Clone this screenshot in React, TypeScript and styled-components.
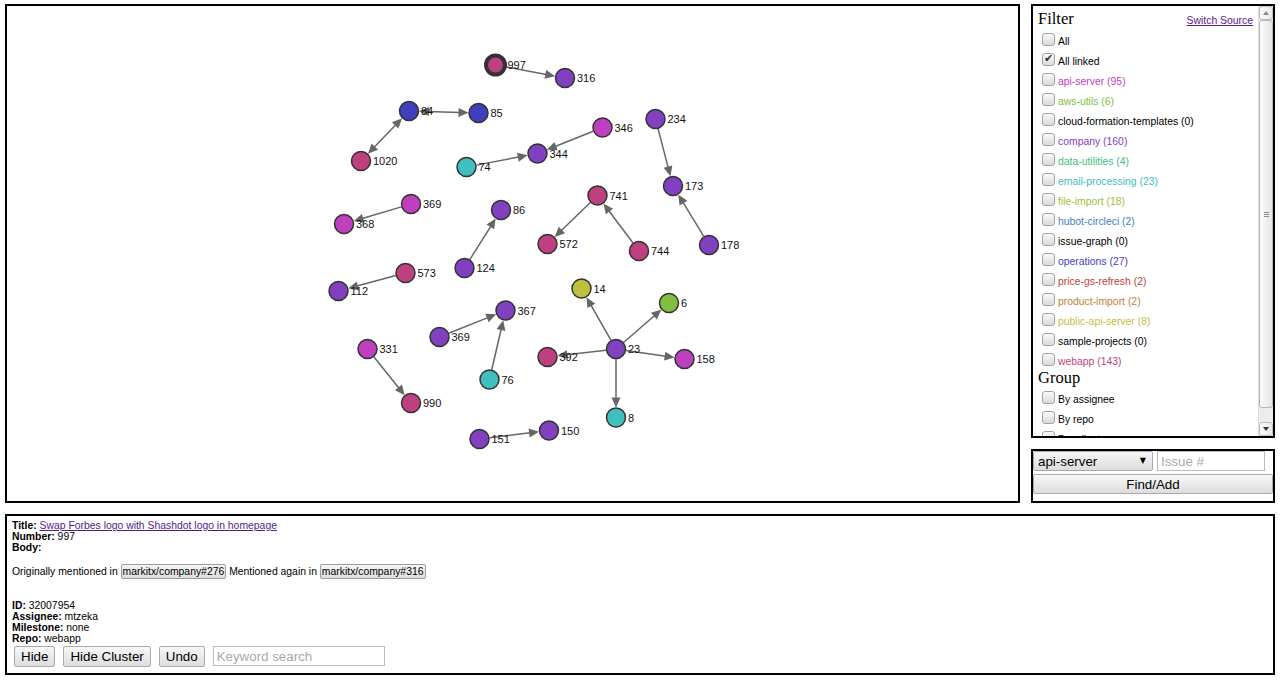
import React from 'react';
import styled, {createGlobalStyle} from 'styled-components';

const GlobalStyle = createGlobalStyle`
    html, body {
        margin: 0;
        padding: 0;
        background: #fff;
    }
    body {
        font-family: "Liberation Sans", Arial, sans-serif;
        color: #000;
    }
`

const hue = (h: number) => `hsl(${h}, 50%, 50%)`

const colors = {
    apiServer: hue(300),
    aws: hue(90),
    company: hue(270),
    dataUtils: hue(150),
    email: hue(180),
    fileImport: hue(75),
    hubot: hue(210),
    operations: hue(240),
    price: hue(0),
    product: hue(30),
    publicApi: hue(60),
    webapp: hue(330),
}

const repos = [
    {name: 'api-server', count: 95, color: colors.apiServer},
    {name: 'aws-utils', count: 6, color: colors.aws},
    {name: 'cloud-formation-templates', count: 0, color: '#000'},
    {name: 'company', count: 160, color: colors.company},
    {name: 'data-utilities', count: 4, color: colors.dataUtils},
    {name: 'email-processing', count: 23, color: colors.email},
    {name: 'file-import', count: 18, color: colors.fileImport},
    {name: 'hubot-circleci', count: 2, color: colors.hubot},
    {name: 'issue-graph', count: 0, color: '#000'},
    {name: 'operations', count: 27, color: colors.operations},
    {name: 'price-gs-refresh', count: 2, color: colors.price},
    {name: 'product-import', count: 2, color: colors.product},
    {name: 'public-api-server', count: 8, color: colors.publicApi},
    {name: 'sample-projects', count: 0, color: '#000'},
    {name: 'webapp', count: 143, color: colors.webapp},
]

type GraphNode = { key: string, label: string, x: number, y: number, color: string, selected?: boolean }

// positions are page coordinates, the svg is shifted by the panel offset
const nodes: GraphNode[] = [
    {key: '997', label: '997', x: 495.5, y: 65, color: colors.webapp, selected: true},
    {key: '316', label: '316', x: 565, y: 78, color: colors.company},
    {key: '84', label: '84', x: 409, y: 111, color: colors.operations},
    {key: '85', label: '85', x: 478.5, y: 113, color: colors.operations},
    {key: '1020', label: '1020', x: 361, y: 161, color: colors.webapp},
    {key: '346', label: '346', x: 602.5, y: 127.5, color: colors.apiServer},
    {key: '344', label: '344', x: 537.5, y: 153.5, color: colors.company},
    {key: '74', label: '74', x: 466.5, y: 167, color: colors.email},
    {key: '234', label: '234', x: 655.5, y: 119, color: colors.company},
    {key: '173', label: '173', x: 673, y: 186, color: colors.company},
    {key: '178', label: '178', x: 709, y: 245, color: colors.company},
    {key: '741', label: '741', x: 597.5, y: 195.5, color: colors.webapp},
    {key: '572', label: '572', x: 547.5, y: 244, color: colors.webapp},
    {key: '744', label: '744', x: 639, y: 251, color: colors.webapp},
    {key: '369a', label: '369', x: 411, y: 204, color: colors.apiServer},
    {key: '368', label: '368', x: 344, y: 224, color: colors.apiServer},
    {key: '86', label: '86', x: 501, y: 210, color: colors.company},
    {key: '124', label: '124', x: 464.5, y: 268, color: colors.company},
    {key: '573', label: '573', x: 405.5, y: 273, color: colors.webapp},
    {key: '112', label: '112', x: 338.5, y: 291, color: colors.company},
    {key: '14', label: '14', x: 581.5, y: 288.5, color: colors.publicApi},
    {key: '6', label: '6', x: 669, y: 303, color: colors.aws},
    {key: '23', label: '23', x: 616, y: 349, color: colors.company},
    {key: '392', label: '392', x: 547.5, y: 357, color: colors.webapp},
    {key: '158', label: '158', x: 684.5, y: 359, color: colors.apiServer},
    {key: '8', label: '8', x: 616, y: 417.5, color: colors.email},
    {key: '367', label: '367', x: 505.5, y: 310.5, color: colors.company},
    {key: '369b', label: '369', x: 439.5, y: 337, color: colors.company},
    {key: '76', label: '76', x: 489.5, y: 379.5, color: colors.email},
    {key: '331', label: '331', x: 367.5, y: 349, color: colors.apiServer},
    {key: '990', label: '990', x: 411, y: 403, color: colors.webapp},
    {key: '151', label: '151', x: 479.5, y: 439, color: colors.company},
    {key: '150', label: '150', x: 549, y: 430.5, color: colors.company},
]

const links: [string, string, boolean?][] = [
    ['997', '316'],
    ['84', '85', true],
    ['1020', '84', true],
    ['346', '344'],
    ['74', '344'],
    ['234', '173'],
    ['178', '173'],
    ['741', '572'],
    ['744', '741'],
    ['369a', '368'],
    ['124', '86'],
    ['573', '112'],
    ['23', '14'],
    ['23', '6'],
    ['23', '392'],
    ['23', '158'],
    ['23', '8'],
    ['369b', '367'],
    ['76', '367'],
    ['331', '990'],
    ['151', '150'],
]

const byKey = (k: string) => nodes.find(n => n.key === k)!

const R = 10
const HEAD = 10
const HALF = 4.5

function arrowHead(tipX: number, tipY: number, ux: number, uy: number) {
    const bx = tipX - ux * HEAD
    const by = tipY - uy * HEAD
    return `${tipX},${tipY} ${bx - uy * HALF},${by + ux * HALF} ${bx + uy * HALF},${by - ux * HALF}`
}

function Link({from, to, both}: { from: GraphNode, to: GraphNode, both?: boolean }) {
    const dx = to.x - from.x
    const dy = to.y - from.y
    const len = Math.hypot(dx, dy)
    const ux = dx / len
    const uy = dy / len
    const startOff = both ? R + HEAD - 1 : R
    const x1 = from.x + ux * startOff
    const y1 = from.y + uy * startOff
    const x2 = to.x - ux * (R + HEAD - 1)
    const y2 = to.y - uy * (R + HEAD - 1)
    return (
        <g>
            <line x1={x1} y1={y1} x2={x2} y2={y2} stroke="#666" strokeWidth={1.5}/>
            <polygon points={arrowHead(to.x - ux * R, to.y - uy * R, ux, uy)} fill="#666"/>
            {both && <polygon points={arrowHead(from.x + ux * R, from.y + uy * R, -ux, -uy)} fill="#666"/>}
        </g>
    )
}

function Graph() {
    return (
        <svg width="100%" height="100%">
            <g transform="translate(-7,-6)">
                {links.map(([a, b, both]) => (
                    <Link key={a + b} from={byKey(a)} to={byKey(b)} both={both}/>
                ))}
                {nodes.map(n => (
                    <g key={n.key}>
                        <circle cx={n.x} cy={n.y} r={9.5} fill={n.color}
                                stroke="#333" strokeWidth={n.selected ? 4 : 1.5}/>
                        <NodeLabel x={n.x + 12} y={n.y + 4}>{n.label}</NodeLabel>
                    </g>
                ))}
            </g>
        </svg>
    )
}

function App() {
    return (
        <Page>
            <GlobalStyle/>
            <TopRow>
                <GraphPanel>
                    <Graph/>
                </GraphPanel>
                <Sidebar>
                    <FilterPanel>
                        <FilterList>
                            <FilterHead>
                                <Heading>Filter</Heading>
                                <SwitchLink href="#">Switch Source</SwitchLink>
                            </FilterHead>
                            <Row><Check type="checkbox" readOnly/><span>All</span></Row>
                            <Row><Check type="checkbox" checked readOnly/><span>All linked</span></Row>
                            {repos.map(r => (
                                <Row key={r.name} $color={r.color}>
                                    <Check type="checkbox" readOnly/>
                                    <span>{r.name} ({r.count})</span>
                                </Row>
                            ))}
                            <GroupHead>Group</GroupHead>
                            <Row><Check type="checkbox" readOnly/><span>By assignee</span></Row>
                            <Row><Check type="checkbox" readOnly/><span>By repo</span></Row>
                            <Row><Check type="checkbox" readOnly/><span>By milestone</span></Row>
                        </FilterList>
                        <ScrollBar>
                            <ScrollButton $dir="up"/>
                            <ScrollTrack>
                                <ScrollThumb/>
                            </ScrollTrack>
                            <ScrollButton $dir="down"/>
                        </ScrollBar>
                    </FilterPanel>
                    <FindPanel>
                        <FindRow>
                            <SelectWrap>
                                <RepoSelect defaultValue="api-server">
                                    {repos.map(r => <option key={r.name}>{r.name}</option>)}
                                </RepoSelect>
                                <SelectArrow>▼</SelectArrow>
                            </SelectWrap>
                            <IssueInput placeholder="Issue #"/>
                        </FindRow>
                        <FindButton>Find/Add</FindButton>
                    </FindPanel>
                </Sidebar>
            </TopRow>
            <DetailsPanel>
                <Line><b>Title:</b> <TitleLink href="#">Swap Forbes logo with Shashdot logo in homepage</TitleLink></Line>
                <Line><b>Number:</b> 997</Line>
                <Line><b>Body:</b></Line>
                <Mentions>
                    Originally mentioned in <RefTag>markitx/company#276</RefTag> Mentioned again
                    in <RefTag>markitx/company#316</RefTag>
                </Mentions>
                <Meta>
                    <Line><b>ID:</b> 32007954</Line>
                    <Line><b>Assignee:</b> mtzeka</Line>
                    <Line><b>Milestone:</b> none</Line>
                    <Line><b>Repo:</b> webapp</Line>
                </Meta>
                <Actions>
                    <ActionButton>Hide</ActionButton>
                    <ActionButton>Hide Cluster</ActionButton>
                    <ActionButton>Undo</ActionButton>
                    <SearchInput placeholder="Keyword search"/>
                </Actions>
            </DetailsPanel>
        </Page>
    )
}

export default App;

const Page = styled.div`
    padding: 4px 5px 0 5px;
    width: 1270px;
`
const TopRow = styled.div`
    display: flex;
    gap: 11px;
`
const GraphPanel = styled.div`
    box-sizing: border-box;
    width: 1015px;
    height: 499px;
    border: 2px solid #000;
    overflow: hidden;
`
const NodeLabel = styled.text`
    font-family: "Liberation Sans", Arial, sans-serif;
    font-size: 11px;
    fill: #111;
`
const Sidebar = styled.div`
    width: 244px;
    display: flex;
    flex-direction: column;
    gap: 11px;
`
const FilterPanel = styled.div`
    box-sizing: border-box;
    height: 434px;
    border: 2px solid #000;
    display: flex;
    font-size: 10.4px;
`
const FilterList = styled.div`
    flex: 1;
    overflow: hidden;
`
const ScrollBar = styled.div`
    width: 15px;
    display: flex;
    flex-direction: column;
    background: #ececec;
    border-left: 1px solid #dcdcdc;
    box-sizing: border-box;
`
const ScrollButton = styled.div<{ $dir: 'up' | 'down' }>`
    height: 14px;
    box-sizing: border-box;
    border: 1px solid #bdbdbd;
    border-radius: 3px;
    background: linear-gradient(to right, #fcfcfc, #e8e8e8);
    display: flex;
    align-items: center;
    justify-content: center;

    &::after {
        content: "";
        border-left: 3.5px solid transparent;
        border-right: 3.5px solid transparent;
        ${p => p.$dir === 'up'
    ? 'border-bottom: 4px solid #8a8a8a;'
    : 'border-top: 4px solid #333;'}
    }
`
const ScrollTrack = styled.div`
    flex: 1;
`
const ScrollThumb = styled.div`
    height: 388px;
    box-sizing: border-box;
    border: 1px solid #b8b8b8;
    border-radius: 3px;
    background: linear-gradient(#8c8c8c, #8c8c8c) center calc(50% - 2px) / 5px 1px no-repeat,
    linear-gradient(#8c8c8c, #8c8c8c) center 50% / 5px 1px no-repeat,
    linear-gradient(#8c8c8c, #8c8c8c) center calc(50% + 2px) / 5px 1px no-repeat,
    linear-gradient(to right, #fbfbfb, #e6e6e6);
`
const FilterHead = styled.div`
    height: 25px;
    display: flex;
    align-items: baseline;
    justify-content: space-between;
    padding: 5px 5px 0 5px;
    box-sizing: border-box;
`
const Heading = styled.h3`
    margin: 0;
    font-family: "Liberation Serif", "Times New Roman", serif;
    font-weight: normal;
    font-size: 16.5px;
    line-height: 16px;
`
const GroupHead = styled(Heading)`
    height: 18px;
    padding-left: 5px;
    margin-top: -1px;
    margin-bottom: 1px;
`
const SwitchLink = styled.a`
    color: #551a8b;
    font-size: 10.4px;
`
const Row = styled.label<{ $color?: string }>`
    display: flex;
    align-items: center;
    height: 20px;
    padding-left: 5px;
    color: ${p => p.$color || '#000'};
    white-space: nowrap;
`
const Check = styled.input`
    appearance: none;
    box-sizing: border-box;
    width: 13px;
    height: 13px;
    margin: 0 3px 3px 4px;
    border: 1px solid #a2a2a2;
    border-radius: 3px;
    background: linear-gradient(#fafafa, #dadada);
    position: relative;

    &:checked::after {
        content: "✔";
        position: absolute;
        left: 1px;
        top: -2px;
        font-size: 11px;
        color: #333;
        font-family: "DejaVu Sans", sans-serif;
    }
`
const FindPanel = styled.div`
    box-sizing: border-box;
    height: 54px;
    border: 2px solid #000;
    display: flex;
    flex-direction: column;
    gap: 3px;
`
const FindRow = styled.div`
    display: flex;
    gap: 4px;
`
const SelectWrap = styled.div`
    position: relative;
    width: 120px;
    height: 20px;
`
const RepoSelect = styled.select`
    appearance: none;
    box-sizing: border-box;
    width: 100%;
    height: 100%;
    margin: 0;
    padding: 0 0 0 4px;
    border: 1px solid #aaa;
    border-radius: 2px;
    background: linear-gradient(#f7f7f7, #dcdcdc);
    font-family: "Liberation Sans", Arial, sans-serif;
    font-size: 13.33px;
    color: #000;
`
const SelectArrow = styled.span`
    position: absolute;
    right: 7px;
    top: 5px;
    font-size: 8px;
    pointer-events: none;
    font-family: "DejaVu Sans", sans-serif;
`
const IssueInput = styled.input`
    box-sizing: border-box;
    width: 108px;
    height: 20px;
    margin: 0;
    padding: 0 3px;
    border: 1px solid #bbb;
    font-family: "Liberation Sans", Arial, sans-serif;
    font-size: 13.33px;

    &::placeholder {
        color: #a9a9a9;
    }
`
const FindButton = styled.button`
    box-sizing: border-box;
    width: 240px;
    height: 20px;
    margin: 0;
    padding: 0;
    border: 1px solid #aaa;
    border-radius: 2px;
    background: linear-gradient(#f8f8f8, #dddddd);
    font-family: "Liberation Sans", Arial, sans-serif;
    font-size: 13.33px;
    color: #000;
`
const DetailsPanel = styled.div`
    box-sizing: border-box;
    margin-top: 11px;
    width: 1270px;
    height: 161px;
    border: 2px solid #000;
    padding: 4px 5px;
    font-size: 10.4px;
    line-height: 11px;
`
const Line = styled.div`
    height: 11px;
`
const TitleLink = styled.a`
    color: #551a8b;
`
const Mentions = styled.div`
    margin-top: 11px;
    height: 15px;
    display: flex;
    align-items: center;
    white-space: pre;
`
const RefTag = styled.span`
    display: inline-block;
    box-sizing: border-box;
    height: 15px;
    line-height: 13px;
    padding: 0 1px;
    border: 1px solid #9d9d9d;
    border-radius: 2px;
    background: linear-gradient(#f6f6f6, #dedede);
`
const Meta = styled.div`
    margin-top: 21px;
`
const Actions = styled.div`
    display: flex;
    gap: 8px;
    margin: 2px 0 0 2px;
    align-items: flex-start;
`
const ActionButton = styled.button`
    box-sizing: border-box;
    height: 21px;
    margin: 0;
    padding: 0 6px;
    border: 1px solid #aaa;
    border-radius: 2px;
    background: linear-gradient(#f8f8f8, #dddddd);
    font-family: "Liberation Sans", Arial, sans-serif;
    font-size: 13.33px;
    color: #000;
`
const SearchInput = styled.input`
    box-sizing: border-box;
    width: 172px;
    height: 20px;
    margin: 0;
    padding: 0 3px;
    border: 1px solid #bbb;
    font-family: "Liberation Sans", Arial, sans-serif;
    font-size: 13.33px;

    &::placeholder {
        color: #a9a9a9;
    }
`
